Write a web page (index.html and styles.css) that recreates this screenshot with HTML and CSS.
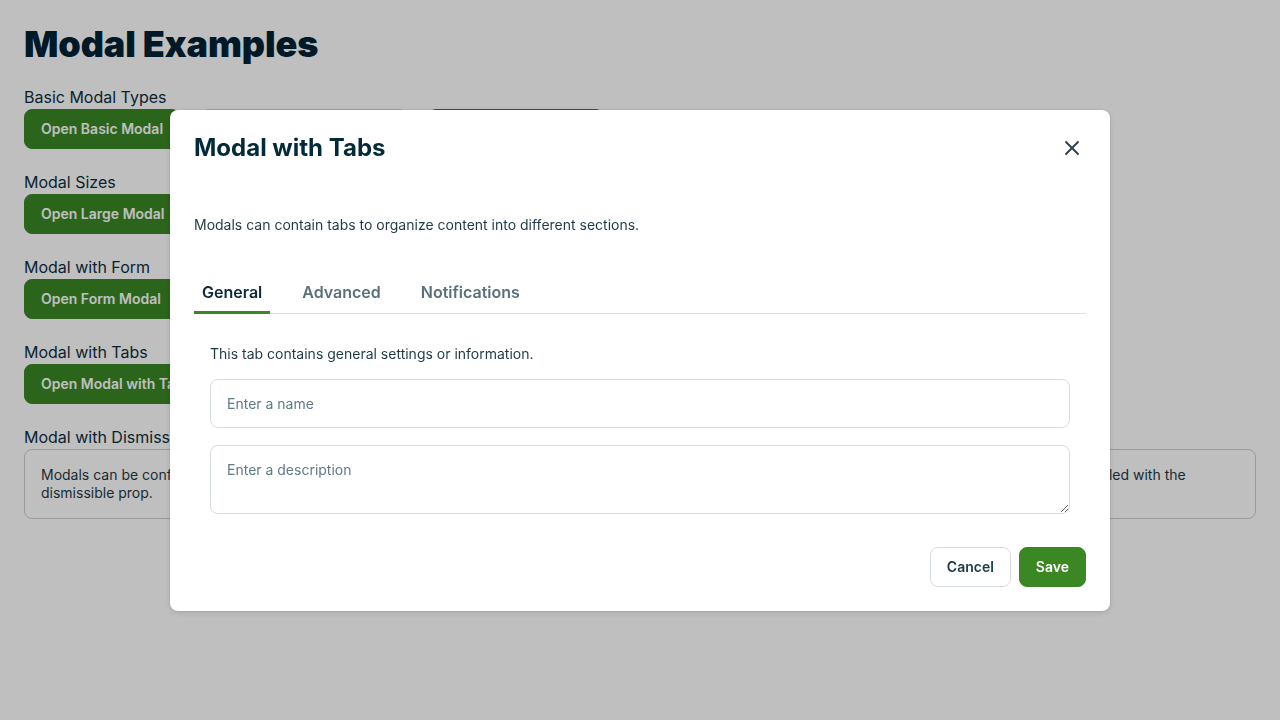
FILE: index.html
```html
<!DOCTYPE html>
<html lang="en">
<head>
<meta charset="utf-8">
<title>Modal Examples</title>
<link rel="stylesheet" href="styles.css">
</head>
<body>
<main class="page">
  <h1 class="page-title">Modal Examples</h1>

  <section class="demo">
    <h2 class="demo-label">Basic Modal Types</h2>
    <div class="btn-row">
      <button class="btn btn-primary">Open Basic Modal</button>
      <button class="btn btn-secondary">Open Confirmation Modal</button>
      <button class="btn btn-primary">Open Warning Modal</button>
    </div>
  </section>

  <section class="demo">
    <h2 class="demo-label">Modal Sizes</h2>
    <div class="btn-row">
      <button class="btn btn-primary">Open Large Modal</button>
    </div>
  </section>

  <section class="demo">
    <h2 class="demo-label">Modal with Form</h2>
    <div class="btn-row">
      <button class="btn btn-primary">Open Form Modal</button>
    </div>
  </section>

  <section class="demo">
    <h2 class="demo-label">Modal with Tabs</h2>
    <div class="btn-row">
      <button class="btn btn-primary">Open Modal with Tabs</button>
    </div>
  </section>

  <section class="demo">
    <h2 class="demo-label">Modal with Dismissible Option</h2>
    <div class="note">Modals can be configured so that they cannot be closed by clicking outside of them or by pressing the Escape key. This is useful for critical actions and is controlled with the dismissible prop.</div>
  </section>
</main>

<div class="overlay">
  <div class="modal" role="dialog" aria-labelledby="modal-title">
    <header class="modal-header">
      <h2 class="modal-title" id="modal-title">Modal with Tabs</h2>
      <button class="close-btn" aria-label="Close">
        <svg width="20" height="20" viewBox="0 0 20 20" fill="none" stroke="currentColor" stroke-width="1.8" stroke-linecap="round"><path d="M4 4L16 16M16 4L4 16"/></svg>
      </button>
    </header>
    <div class="modal-body">
      <p class="modal-desc">Modals can contain tabs to organize content into different sections.</p>
      <div class="tabs">
        <div class="tab-list">
          <button class="tab tab-active">General</button>
          <button class="tab">Advanced</button>
          <button class="tab">Notifications</button>
        </div>
        <div class="tab-panel">
          <p class="panel-text">This tab contains general settings or information.</p>
          <input class="field" type="text" placeholder="Enter a name">
          <textarea class="field field-area" placeholder="Enter a description"></textarea>
        </div>
      </div>
    </div>
    <footer class="modal-footer">
      <button class="btn btn-outline">Cancel</button>
      <button class="btn btn-save">Save</button>
    </footer>
  </div>
</div>
</body>
</html>
```
FILE: styles.css
```css
* { box-sizing: border-box; }

html, body {
  margin: 0;
  padding: 0;
  background: #ffffff;
  font-family: Inter, "Noto Sans", sans-serif;
  color: #002b3a;
}

.page {
  padding: 24px;
}

.page-title {
  margin: 0 0 22px;
  font-size: 36px;
  line-height: 40px;
  font-weight: 900;
  letter-spacing: -0.1px;
  color: #002233;
}

.demo {
  margin-bottom: 22px;
}

.demo-label {
  margin: 0;
  font-size: 16px;
  font-weight: 400;
  line-height: 23px;
  color: #0f2f3d;
}

.btn-row {
  display: flex;
  gap: 20px;
}

.btn {
  font-family: inherit;
  font-size: 14px;
  font-weight: 600;
  line-height: 20px;
  height: 40px;
  padding: 9px 16px;
  border-radius: 8px;
  border: 1px solid transparent;
  cursor: pointer;
}

.btn-primary {
  background: #3a8724;
  color: #ffffff;
  border-color: #3a8724;
}

.btn-secondary {
  background: #ffffff;
  color: #1c3a47;
  border-color: #d6dde2;
}

.note {
  border: 1px solid #cdcdcd;
  border-radius: 8px;
  padding: 16px;
  font-size: 14px;
  line-height: 18px;
  color: #1f3a47;
}

/* overlay + modal */
.overlay {
  position: fixed;
  inset: 0;
  background: rgba(0, 0, 0, 0.25);
  display: flex;
  align-items: center;
  justify-content: center;
}

.modal {
  width: 940px;
  background: #ffffff;
  border-radius: 8px;
  box-shadow: 0 2px 6px rgba(0, 0, 0, 0.12), 0 0 0 1px rgba(0, 0, 0, 0.04);
  padding: 24px;
  display: flex;
  flex-direction: column;
}

.modal-header {
  display: flex;
  align-items: center;
  justify-content: space-between;
  height: 28px;
}

.modal-title {
  margin: 0;
  font-size: 24px;
  line-height: 28px;
  font-weight: 700;
  color: #032a39;
}

.close-btn {
  width: 24px;
  height: 24px;
  margin-right: 2px;
  padding: 2px;
  border: 0;
  background: transparent;
  color: #263f4b;
  display: flex;
  align-items: center;
  justify-content: center;
  cursor: pointer;
}

.modal-body {
  padding-top: 54px;
}

.modal-desc {
  margin: 0 0 40px;
  font-size: 14px;
  line-height: 18px;
  color: #1f3a47;
}

.tab-list {
  display: flex;
  gap: 24px;
  border-bottom: 1px solid #d9dfe2;
}

.tab {
  font-family: inherit;
  font-size: 16px;
  font-weight: 600;
  line-height: 20px;
  color: #5a717c;
  background: transparent;
  border: 0;
  border-bottom: 3px solid transparent;
  margin-bottom: -1px;
  padding: 8px 8px 9px;
  cursor: pointer;
}

.tab-active {
  color: #0a2a37;
  border-bottom-color: #3a8724;
}

.tab-panel {
  padding: 16px 16px 0;
  display: flex;
  flex-direction: column;
}

.panel-text {
  margin: 15px 0 16px;
  font-size: 14px;
  line-height: 18px;
  color: #1f3a47;
}

.field {
  font-family: inherit;
  font-size: 14px;
  line-height: 18px;
  color: #1f3a47;
  border: 1px solid #d6dde1;
  border-radius: 8px;
  padding: 14px 16px;
  height: 49px;
  background: #ffffff;
  outline: none;
}

.field::placeholder {
  color: #627a85;
}

.field-area {
  margin-top: 17px;
  height: 69px;
  padding-top: 15px;
  resize: vertical;
}

.modal-footer {
  display: flex;
  justify-content: flex-end;
  gap: 8px;
  margin-top: 33px;
}

.btn-outline {
  background: #ffffff;
  color: #1c3a47;
  border-color: #d6dde2;
}

.btn-save {
  background: #3a8724;
  color: #ffffff;
  border-color: #3a8724;
}
```
